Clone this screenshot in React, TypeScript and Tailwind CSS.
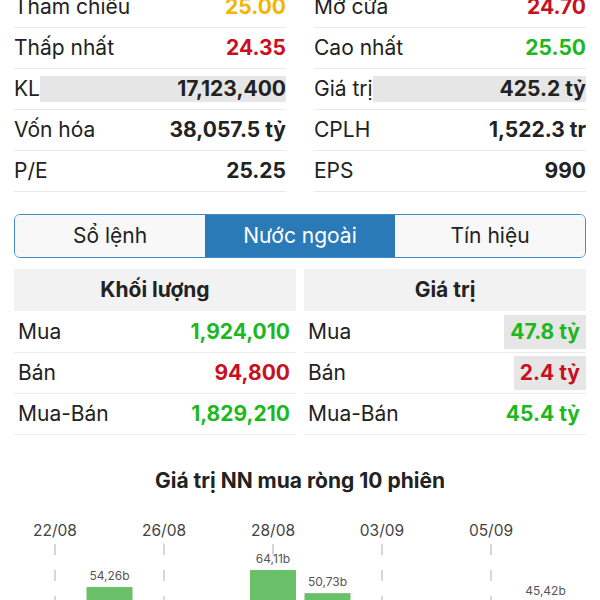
import React from "react";

type Stat = { label: string; value: string; color?: string; flash?: boolean };

const leftStats: Stat[] = [
  { label: "Tham chiếu", value: "25.00", color: "text-[#f2b600]" },
  { label: "Thấp nhất", value: "24.35", color: "text-[#c9101e]" },
  { label: "KL", value: "17,123,400", flash: true },
  { label: "Vốn hóa", value: "38,057.5 tỷ" },
  { label: "P/E", value: "25.25" },
];

const rightStats: Stat[] = [
  { label: "Mở cửa", value: "24.70", color: "text-[#c9101e]" },
  { label: "Cao nhất", value: "25.50", color: "text-[#1db81d]" },
  { label: "Giá trị", value: "425.2 tỷ", flash: true },
  { label: "CPLH", value: "1,522.3 tr" },
  { label: "EPS", value: "990" },
];

type Flow = { label: string; value: string; color: string; flash?: boolean };

const volumeRows: Flow[] = [
  { label: "Mua", value: "1,924,010", color: "text-[#1db81d]" },
  { label: "Bán", value: "94,800", color: "text-[#c9101e]" },
  { label: "Mua-Bán", value: "1,829,210", color: "text-[#1db81d]" },
];

const valueRows: Flow[] = [
  { label: "Mua", value: "47.8 tỷ", color: "text-[#1db81d]", flash: true },
  { label: "Bán", value: "2.4 tỷ", color: "text-[#c9101e]", flash: true },
  { label: "Mua-Bán", value: "45.4 tỷ", color: "text-[#1db81d]" },
];

// net foreign buy, 10 sessions (only the top of the chart is on screen)
const sessions = [
  { date: "22/08", v: 31.2 },
  { date: "23/08", v: 54.26 },
  { date: "26/08", v: 22.4 },
  { date: "27/08", v: 18.9 },
  { date: "28/08", v: 64.11 },
  { date: "29/08", v: 50.73 },
  { date: "03/09", v: 28.5 },
  { date: "04/09", v: 12.7 },
  { date: "05/09", v: 36.1 },
  { date: "06/09", v: 45.42 },
];

const StatColumn: React.FC<{ rows: Stat[] }> = ({ rows }) => (
  <div className="flex flex-col">
    {rows.map((r) => (
      <div
        key={r.label}
        className="h-[41px] flex items-center border-b border-[#e8e8e8]"
      >
        <span className="text-[21px] text-[#222] whitespace-nowrap">
          {r.label}
        </span>
        <span
          className={`flex-1 h-[26px] flex items-center justify-end text-[21px] font-bold whitespace-nowrap ${
            r.color ?? "text-[#222]"
          } ${r.flash ? "bg-[#e6e6e6]" : ""}`}
        >
          {r.value}
        </span>
      </div>
    ))}
  </div>
);

const FlowTable: React.FC<{ title: string; rows: Flow[] }> = ({
  title,
  rows,
}) => (
  <div className="flex flex-col">
    <div className="h-[42px] bg-[#f2f2f2] flex items-center justify-center text-[21px] font-bold text-[#222]">
      {title}
    </div>
    <div className="h-px" />
    {rows.map((r) => (
      <div
        key={r.label}
        className="h-[41px] flex items-center justify-between pl-[4px] border-b border-[#ececec]"
      >
        <span className="text-[21px] text-[#222]">{r.label}</span>
        <span
          className={`h-[34px] flex items-center px-[6px] text-[21px] font-bold ${
            r.color
          } ${r.flash ? "bg-[#e6e6e6]" : ""}`}
        >
          {r.value}
        </span>
      </div>
    ))}
  </div>
);

const NetBuyChart: React.FC = () => {
  const base = 185.7;
  const scale = 1.726;
  return (
    <svg width="600" height="105" className="block">
      {sessions.map((s, i) => {
        const cx = 55 + i * 54.5;
        const top = base - s.v * scale;
        return (
          <g key={s.date}>
            {i % 2 === 0 && (
              <>
                <text
                  x={cx}
                  y={41}
                  textAnchor="middle"
                  fontSize="15.5"
                  fill="#444"
                >
                  {s.date}
                </text>
                <line
                  x1={cx}
                  x2={cx}
                  y1={49}
                  y2={200}
                  stroke="#bdbdbd"
                  strokeWidth="1.2"
                  strokeDasharray="11 15"
                />
              </>
            )}
            <rect x={cx - 23} y={top} width={46} height={base - top} fill="#6abf69" />
            <text
              x={cx}
              y={top - 7}
              textAnchor="middle"
              fontSize="12"
              fill="#555"
            >
              {s.v.toFixed(2).replace(".", ",")}b
            </text>
          </g>
        );
      })}
    </svg>
  );
};

export default function App() {
  return (
    <div
      className="w-[600px] h-[600px] overflow-hidden bg-white"
      style={{ fontFamily: "Inter, 'Noto Sans', sans-serif" }}
    >
      <div className="-mt-[13px] px-[14px] grid grid-cols-2 gap-[28px]">
        <StatColumn rows={leftStats} />
        <StatColumn rows={rightStats} />
      </div>

      <div className="mx-[14px] mt-[22px] h-[44px] flex border border-[#3f8fc4] rounded-[6px] overflow-hidden text-[21px]">
        <div className="flex-1 flex items-center justify-center bg-[#f8f8f8] text-[#222]">
          Sổ lệnh
        </div>
        <div className="flex-1 flex items-center justify-center bg-[#2a7ab8] text-white">
          Nước ngoài
        </div>
        <div className="flex-1 flex items-center justify-center bg-[#f8f8f8] text-[#222]">
          Tín hiệu
        </div>
      </div>

      <div className="mt-[11px] px-[14px] grid grid-cols-2 gap-[8px]">
        <FlowTable title="Khối lượng" rows={volumeRows} />
        <FlowTable title="Giá trị" rows={valueRows} />
      </div>

      <div className="mt-[32px] h-[28px] flex items-center justify-center text-[21px] font-bold text-[#222]">
        Giá trị NN mua ròng 10 phiên
      </div>
      <NetBuyChart />
    </div>
  );
}
